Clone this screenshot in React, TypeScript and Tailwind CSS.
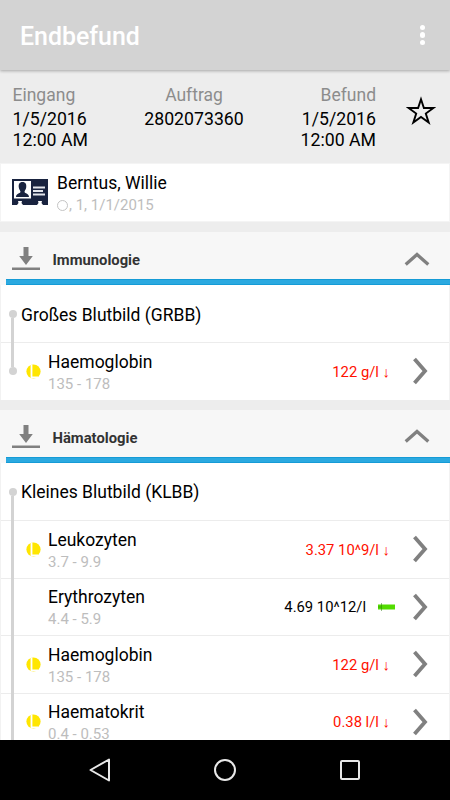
import React from "react";

interface LabItem {
  name: string;
  range: string;
  value: string;
  low?: boolean;
}

interface LabSection {
  title: string;
  group: string;
  open?: boolean;
  items: LabItem[];
}

const sections: LabSection[] = [
  {
    title: "Immunologie",
    group: "Großes Blutbild (GRBB)",
    items: [{ name: "Haemoglobin", range: "135 - 178", value: "122 g/l", low: true }],
  },
  {
    title: "Hämatologie",
    group: "Kleines Blutbild (KLBB)",
    open: true,
    items: [
      { name: "Leukozyten", range: "3.7 - 9.9", value: "3.37 10^9/l", low: true },
      { name: "Erythrozyten", range: "4.4 - 5.9", value: "4.69 10^12/l" },
      { name: "Haemoglobin", range: "135 - 178", value: "122 g/l", low: true },
      { name: "Haematokrit", range: "0.4 - 0.53", value: "0.38 l/l", low: true },
    ],
  },
];

const StarIcon = () => (
  <svg className="h-[30px] w-[30px]" viewBox="0 0 30 30" fill="none">
    <path
      d="M15 3.2 L17.9 12 H27.4 L19.8 17.5 L22.7 26.6 L15 21 L7.3 26.6 L10.2 17.5 L2.6 12 H12.1 Z"
      stroke="#000"
      strokeWidth="1.9"
    />
  </svg>
);

const PatientIcon = () => (
  <svg className="h-[26px] w-9" viewBox="0 0 36 26">
    <path d="M0 0H36V26H31L29.500 24L30 22H26L26.500 24L25 26H11L9.500 24L10 22H6L6.500 24L5 26H0Z" fill="#19233f" />
    <path d="M2 2H19V19.500H2Z" fill="#fff" />
    <path
      d="M10.500 3C13.500 3 14.700 5.200 14.200 8.500C13.900 10.700 12.500 11.500 12.500 13C13 14.500 17 14.500 17 18H4C4 14.500 8 14.500 8.500 13C8.500 11.500 7.100 10.700 6.800 8.500C6.300 5.200 7.500 3 10.500 3Z"
      fill="#19233f"
    />
    <path d="M21 8.500H33M21 12H31M21 15.500H33" stroke="#e4e6ec" strokeWidth="1.900" />
  </svg>
);

const DownloadIcon = () => (
  <svg className="h-6 w-7" viewBox="0 0 28 24" fill="#808080">
    <path d="M11.500 0H16.500V9H20.800L14 18L7.200 9H11.500Z" />
    <path d="M0 20.500H28V23H0Z" />
  </svg>
);

const ChevronUp = () => (
  <svg className="h-4 w-[26px]" viewBox="0 0 26 16" fill="none">
    <path d="M1.700 13.500L13 3.500L24.300 13.500" stroke="#808080" strokeWidth="3.300" />
  </svg>
);

const ChevronRight = () => (
  <svg className="h-7 w-4" viewBox="0 0 16 28" fill="none">
    <path d="M2.500 2L13 14L2.500 26" stroke="#808080" strokeWidth="3.800" />
  </svg>
);

const ResultMarker = () => (
  <svg className="h-[15px] w-[15px]" viewBox="0 0 15 15">
    <circle cx="7.500" cy="7.500" r="7.100" fill="#ffe600" />
    <path d="M5.500 1V13.300H12" stroke="#fff" strokeWidth="1.800" fill="none" />
  </svg>
);

interface RailProps {
  top?: boolean;
  dot?: boolean;
  bottom?: boolean;
}

// vertical line on the left that ties the items to their group
const Rail: React.FC<RailProps> = ({ top, dot, bottom }) => (
  <div className="flex h-full w-[9px] shrink-0 flex-col items-center">
    <div className={`w-[3px] flex-1 ${top ? "bg-[#d3d3d3]" : ""}`} />
    {dot && <div className="h-[8px] w-[8px] rounded-full bg-[#d3d3d3]" />}
    <div className={`w-[3px] flex-1 ${bottom ? "bg-[#d3d3d3]" : ""}`} />
  </div>
);

const ItemRow: React.FC<{ item: LabItem; last: boolean }> = ({ item, last }) => (
  <div className="flex h-[57.5px] items-center bg-white pl-[7px] shadow-[inset_0_1px_0_#ececec]">
    <Rail top dot={last} bottom={!last} />
    <div className="ml-[9px] w-[15px] shrink-0">{item.low && <ResultMarker />}</div>
    <div className="ml-[7px] flex-1 pt-[3.5px] whitespace-nowrap">
      <div className="text-[17.5px] leading-[22px] text-black">{item.name}</div>
      <div className="text-[15px] leading-[22px] text-[#bdbdbd]">{item.range}</div>
    </div>
    {item.low ? (
      <div className="pt-[1.5px] text-[14.8px] whitespace-nowrap text-[#ff1000]">
        {item.value} <span className="font-light">↓</span>
      </div>
    ) : (
      <div className="flex items-center pt-[1.5px] text-[14.8px] whitespace-nowrap text-black">
        {item.value}
        <svg className="mr-[-5px] ml-3 h-[8px] w-[17px]" viewBox="0 0 17 8">
          <path d="M0 1.500H17V6.500H0Z" fill="#53dc00" />
          <path d="M0 4H3M3.500 0V8" stroke="#26720a" strokeWidth="0.700" strokeOpacity="0.700" />
        </svg>
      </div>
    )}
    <div className="mr-[21px] ml-[22px]">
      <ChevronRight />
    </div>
  </div>
);

const Section: React.FC<{ section: LabSection }> = ({ section }) => (
  <section className="mt-[10px]">
    <div className="flex h-[47px] items-center bg-[#f7f7f7] pr-5 pl-3">
      <div className="mt-[7px]">
        <DownloadIcon />
      </div>
      <h2 className="ml-[12.5px] flex-1 pt-[8.5px] text-[14.8px] font-bold text-[#333]">{section.title}</h2>
      <div className="mt-[6px]">
        <ChevronUp />
      </div>
    </div>
    <div className="bg-[#f7f7f7] pl-[6px]">
      <div className="h-[6px] border-y border-[#159bd6] bg-[#2ba9e0]" />
    </div>
    <div className="border-x border-[#f2f2f2]">
      <div className="flex h-[57.4px] items-center bg-white pl-[7px]">
        <Rail dot bottom />
        <div className="ml-1 pt-[2px] text-[17.5px] whitespace-nowrap text-black">{section.group}</div>
      </div>
      {section.items.map((item, i) => (
        <ItemRow key={item.name} item={item} last={!section.open && i === section.items.length - 1} />
      ))}
    </div>
  </section>
);

export default function App() {
  return (
    <div className="flex h-[800px] w-[450px] flex-col overflow-hidden bg-[#ededed] font-['Roboto',sans-serif]">
      <header className="z-10 flex h-[70px] shrink-0 items-center justify-between bg-[#d3d3d3] pr-[25px] pl-5 shadow-[0_1px_3px_rgba(0,0,0,0.3)]">
        <h1 className="pt-[3px] text-[24.9px] font-medium text-white">Endbefund</h1>
        <div className="flex flex-col gap-[2px]">
          <span className="h-[5.5px] w-[5.5px] rounded-full bg-white" />
          <span className="h-[5.5px] w-[5.5px] rounded-full bg-white" />
          <span className="h-[5.5px] w-[5.5px] rounded-full bg-white" />
        </div>
      </header>

      <div className="flex h-[93px] shrink-0 pt-[15px] pl-[12.5px] text-[17.7px] leading-[20.5px] text-black">
        <div className="w-[121px]">
          <div className="mb-[3.5px] text-[17.5px] text-[#8c8c8c]">Eingang</div>
          <div>1/5/2016</div>
          <div>12:00 AM</div>
        </div>
        <div className="w-[121px] text-center">
          <div className="mb-[3.5px] text-[17.5px] text-[#8c8c8c]">Auftrag</div>
          <div>2802073360</div>
        </div>
        <div className="w-[121.5px] text-right">
          <div className="mb-[3.5px] text-[17.5px] text-[#8c8c8c]">Befund</div>
          <div>1/5/2016</div>
          <div>12:00 AM</div>
        </div>
        <div className="mt-[11px] ml-[30px]">
          <StarIcon />
        </div>
      </div>

      <main className="min-h-0 flex-1 overflow-hidden">
        <div className="flex h-[59px] border border-[#f4f4f4] bg-white pl-[11px]">
          <div className="mt-[15px]">
            <PatientIcon />
          </div>
          <div className="ml-[9px] pt-[9px]">
            <div className="text-[17.5px] leading-[21px] text-black">Berntus, Willie</div>
            <div className="flex items-center text-[15px] leading-[23px] text-[#bdbdbd]">
              <span className="mr-px h-[11px] w-[11px] rounded-full border border-[#c4c4c4]" />
              , 1, 1/1/2015
            </div>
          </div>
        </div>
        {sections.map((section) => (
          <Section key={section.title} section={section} />
        ))}
      </main>

      <nav className="flex h-[60px] shrink-0 items-center justify-center gap-[101px] bg-black">
        <svg className="h-6 w-6" viewBox="0 0 24 24" fill="none" stroke="#e8e8e8" strokeWidth="2" strokeLinejoin="round">
          <path d="M2.500 12L21 1.500V22.500Z" />
        </svg>
        <svg className="h-6 w-6" viewBox="0 0 24 24" fill="none" stroke="#e8e8e8" strokeWidth="2">
          <circle cx="12" cy="12" r="10" />
        </svg>
        <svg className="h-6 w-6" viewBox="0 0 24 24" fill="none" stroke="#e8e8e8" strokeWidth="2">
          <rect x="3" y="3" width="18" height="18" rx="1" />
        </svg>
      </nav>
    </div>
  );
}
